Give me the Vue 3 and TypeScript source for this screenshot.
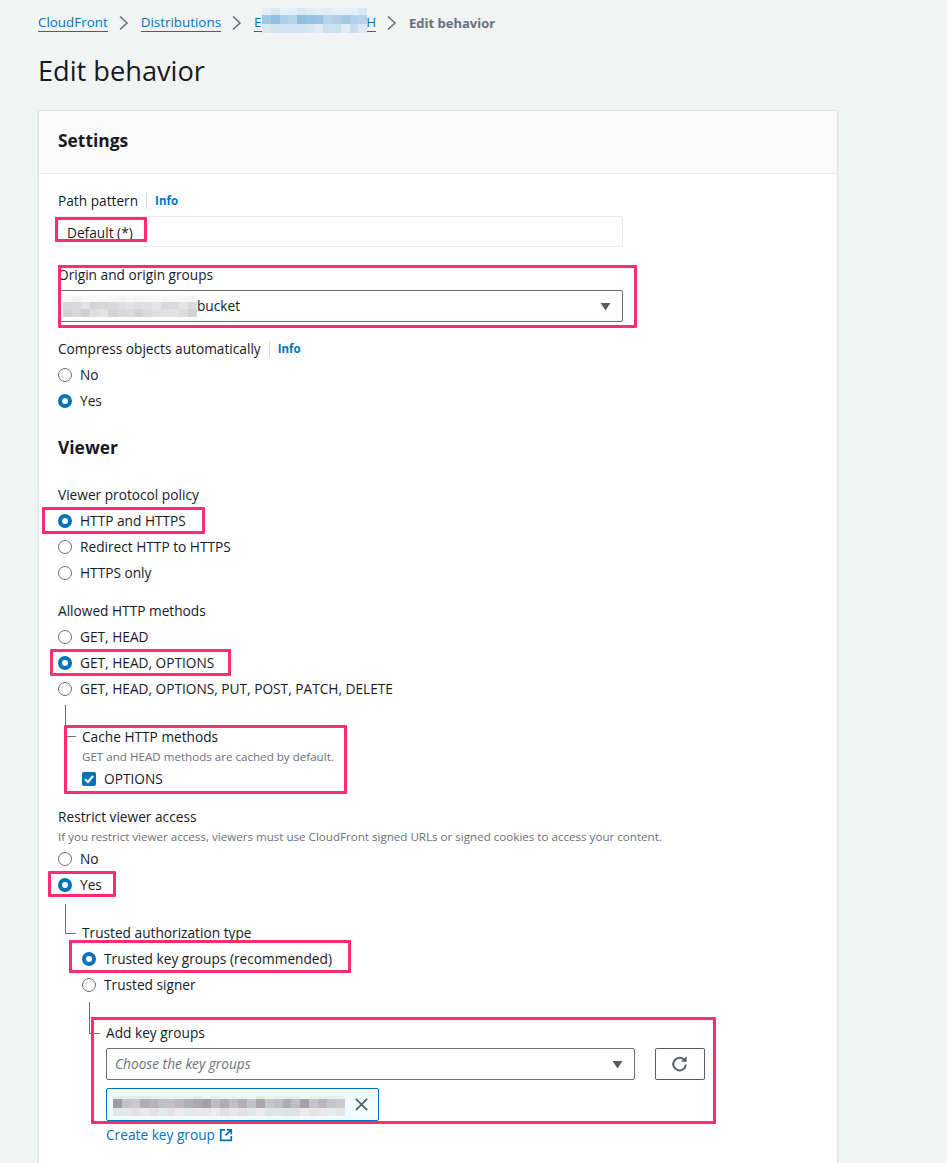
<script setup lang="ts">
const marks: string[] = ['m1', 'm2', 'm3', 'm4', 'm5', 'm6', 'm7', 'm8']

type Rgb = [number, number, number]

function mosaic(cols: number, rows: number, seed: number, tint: Rgb, strength: number[]): string[] {
  const out: string[] = []
  for (let r = 0; r < rows; r++) {
    for (let c = 0; c < cols; c++) {
      const n = Math.abs(Math.sin((c + 1) * 12.9898 + (r + 1) * 78.233 + seed) * 43758.5453) % 1
      const a = strength[r] * (0.55 + 0.45 * n)
      const mix = (v: number) => Math.round(255 + (v - 255) * a)
      out.push(`rgb(${mix(tint[0])},${mix(tint[1])},${mix(tint[2])})`)
    }
  }
  return out
}

const blueCells = mosaic(12, 3, 1, [120, 175, 215], [0.3, 0.85, 0.42])
const originCells = mosaic(15, 3, 2, [160, 162, 166], [0.12, 0.5, 0.5])
const keyCells = mosaic(26, 3, 3, [150, 152, 157], [0.2, 0.95, 0.3])
</script>

<template>
  <div class="page">
    <nav class="crumbs">
      <a class="link">CloudFront</a>
      <svg class="chev" viewBox="0 0 12 16"><path d="M2 1.5 L9 8 L2 14.5" /></svg>
      <a class="link">Distributions</a>
      <svg class="chev" viewBox="0 0 12 16"><path d="M2 1.5 L9 8 L2 14.5" /></svg>
      <a class="link dist">E<span class="dist-gap"></span>H
        <span class="mosaic blue-blur"><i v-for="(c, i) in blueCells" :key="i" :style="{ background: c }"></i></span>
      </a>
      <svg class="chev" viewBox="0 0 12 16"><path d="M2 1.5 L9 8 L2 14.5" /></svg>
      <span class="current">Edit behavior</span>
    </nav>
    <h1 class="title">Edit behavior</h1>

    <section class="card">
      <header class="card-head">Settings</header>
      <div class="card-body">
        <div class="label-row"><span>Path pattern</span><i class="sep"></i><a class="info">Info</a></div>
        <div class="readonly">Default (*)</div>

        <div class="label-row origin-label"><span>Origin and origin groups</span></div>
        <div class="select origin-select">
          <span class="mosaic origin-blur"><i v-for="(c, i) in originCells" :key="i" :style="{ background: c }"></i></span>
          <span>bucket</span>
          <svg class="caret" viewBox="0 0 12 10"><path d="M0.5 1h11L6 9.5z" /></svg>
        </div>

        <div class="label-row compress"><span>Compress objects automatically</span><i class="sep"></i><a class="info">Info</a></div>
        <label class="radio"><i class="dot"></i>No</label>
        <label class="radio"><i class="dot on"></i>Yes</label>

        <h2 class="sub">Viewer</h2>

        <div class="label-row"><span>Viewer protocol policy</span></div>
        <label class="radio"><i class="dot on"></i>HTTP and HTTPS</label>
        <label class="radio"><i class="dot"></i>Redirect HTTP to HTTPS</label>
        <label class="radio"><i class="dot"></i>HTTPS only</label>

        <div class="label-row gap-top"><span>Allowed HTTP methods</span></div>
        <label class="radio"><i class="dot"></i>GET, HEAD</label>
        <label class="radio"><i class="dot on"></i>GET, HEAD, OPTIONS</label>
        <label class="radio"><i class="dot"></i>GET, HEAD, OPTIONS, PUT, POST, PATCH, DELETE</label>

        <div class="nested cache">
          <div class="label-row"><span>Cache HTTP methods</span></div>
          <div class="hint cache-hint">GET and HEAD methods are cached by default.</div>
          <label class="radio check-row">
            <svg class="check" viewBox="0 0 14 14"><rect width="14" height="14" rx="2" /><path d="M3 7.2 L6 10 L11 4" /></svg>OPTIONS
          </label>
        </div>

        <div class="label-row restrict"><span>Restrict viewer access</span></div>
        <div class="hint restrict-hint">If you restrict viewer access, viewers must use CloudFront signed URLs or signed cookies to access your content.</div>
        <label class="radio after-hint"><i class="dot"></i>No</label>
        <label class="radio"><i class="dot on"></i>Yes</label>

        <div class="nested trusted">
          <div class="label-row"><span>Trusted authorization type</span></div>
          <label class="radio"><i class="dot on"></i>Trusted key groups (recommended)</label>
          <label class="radio"><i class="dot"></i>Trusted signer</label>

          <div class="nested keys">
            <div class="label-row"><span>Add key groups</span></div>
            <div class="key-row">
              <div class="select key-select">
                <em>Choose the key groups</em>
                <svg class="caret" viewBox="0 0 12 10"><path d="M0.5 1h11L6 9.5z" /></svg>
              </div>
              <button class="refresh" type="button" aria-label="Refresh">
                <svg viewBox="0 0 18 18"><path d="M14.8 9.5a6.3 6.3 0 1 1-2-5" /><path class="fill" d="M15.6 1.2v5.6H10z" /></svg>
              </button>
            </div>
            <div class="token">
              <span class="mosaic token-blur"><i v-for="(c, i) in keyCells" :key="i" :style="{ background: c }"></i></span>
              <svg class="x" viewBox="0 0 16 16"><path d="M2 2 L14 14 M14 2 L2 14" /></svg>
            </div>
            <a class="create">Create key group
              <svg class="ext" viewBox="0 0 16 16"><path d="M7 2H2v12h12V9" /><path d="M9 2h5v5M14 2 L7.5 8.5" /></svg>
            </a>
          </div>
        </div>
      </div>
    </section>

    <i v-for="m in marks" :key="m" class="mark" :class="m"></i>
  </div>
</template>

<style>
html, body { margin: 0; background: #f2f3f3; }
</style>

<style scoped>
.page {
  position: relative;
  box-sizing: border-box;
  width: 947px;
  height: 1163px;
  overflow: hidden;
  padding: 12px 0 0 38px;
  background: #f2f3f3;
  color: #16191f;
  font-family: "Open Sans", "Noto Sans", sans-serif;
  font-size: 13.7px;
  line-height: 22px;
}
.crumbs { display: flex; align-items: center; height: 22px; font-size: 13.4px; }
.link { color: #0073bb; border-bottom: 1px solid #0073bb; line-height: 17px; }
.dist { position: relative; display: inline-flex; width: 122px; }
.dist-gap { flex: 1; }
.mosaic { display: grid; }
.blue-blur {
  position: absolute; left: 8px; top: -6px; width: 105px; height: 25px;
  grid-template-columns: repeat(12, 1fr); grid-template-rows: 7px 9px 9px;
}
.chev { width: 12px; height: 16px; margin: 0 11px 0 10px; fill: none; stroke: #687078; stroke-width: 1.6; }
.current { font-weight: 700; color: #687078; font-size: 13px; }
.title { margin: 17px 0 0; font-size: 27.2px; line-height: 40px; font-weight: 400; }
.card {
  width: 800px; margin-top: 19px; box-sizing: border-box;
  background: #fff; border: 1px solid #dfe2e2; border-bottom: 0;
  box-shadow: 0 1px 1px rgba(0, 28, 36, .2);
}
.card-head {
  background: #fafafa; border-bottom: 1px solid #eaeded;
  height: 62px; line-height: 59px; padding-left: 19px;
  font-size: 17.4px; font-weight: 700;
}
.card-body { padding: 16px 19px 40px; }
.label-row { display: flex; align-items: center; height: 22px; }
.sep { width: 1px; height: 16px; background: #d5dbdb; margin: 0 8px; }
.info { color: #0073bb; font-size: 11.5px; font-weight: 700; }
.readonly {
  margin-top: 4px; width: 555px; height: 29px; border: 1px solid #eaeded;
  padding-left: 8px; line-height: 31px; border-radius: 2px;
}
.origin-label { margin-top: 17px; }
.select {
  position: relative; display: flex; align-items: center;
  box-sizing: border-box; border: 1px solid #687078; border-radius: 2px; height: 32px;
}
.origin-select { width: 565px; margin-top: 4px; padding-left: 4px; }
.caret { position: absolute; right: 11px; top: 11px; width: 11px; height: 9px; fill: #545b64; }
.compress { margin-top: 16px; }
.radio { display: flex; align-items: center; height: 22px; margin-top: 4px; }
.dot {
  box-sizing: border-box; width: 14px; height: 14px; border-radius: 50%;
  border: 1px solid #687078; margin-right: 8px; background: #fff;
}
.dot.on { border: 4px solid #0073bb; }
.sub { margin: 23px 0 25px; font-size: 17.4px; line-height: 24px; font-weight: 700; }
.gap-top { margin-top: 16px; }
.hint { font-size: 11.6px; line-height: 16px; color: #687078; }
.cache-hint { margin-top: 1px; }
.restrict-hint { margin-top: 1px; }
.after-hint { margin-top: 3px; }
.check-row { margin-top: 3px; }
.nested { position: relative; padding-left: 24px; }
.nested::before {
  content: ""; position: absolute; left: 7px; width: 10px;
  border-left: 1px solid #687078; border-bottom: 1px solid #687078;
}
.cache { margin-top: 5px; padding-top: 21px; }
.cache::before { top: 0; height: 31px; }
.check { width: 14px; height: 14px; margin-right: 8px; }
.check rect { fill: #0073bb; }
.check path { fill: none; stroke: #fff; stroke-width: 2; }
.restrict { margin-top: 16px; }
.trusted { margin-top: 5px; padding-top: 21px; }
.trusted::before { top: 3px; height: 29px; }
.keys { margin-top: 5px; padding-top: 21px; }
.keys::before { top: 1px; height: 31px; }
.key-row { display: flex; gap: 20px; margin-top: 4px; }
.key-select { width: 529px; padding-left: 8px; color: #687078; }
.refresh {
  width: 50px; height: 32px; box-sizing: border-box; border: 1px solid #545b64;
  border-radius: 2px; background: #fff; padding: 0; display: flex; align-items: center; justify-content: center;
}
.refresh svg { width: 18px; height: 18px; fill: none; stroke: #545b64; stroke-width: 2; }
.refresh .fill { fill: #545b64; stroke: none; }
.token {
  position: relative; box-sizing: border-box; width: 273px; height: 33px; margin-top: 8px;
  border: 1px solid #0073bb; border-radius: 2px; background: #f1faff;
}
.origin-blur {
  width: 134px; height: 21px;
  grid-template-columns: repeat(15, 1fr); grid-template-rows: 6px 7px 8px;
}
.token-blur {
  position: absolute; left: 6px; top: 7px; width: 232px; height: 20px;
  grid-template-columns: repeat(26, 1fr); grid-template-rows: 3px 9px 8px;
}
.x { position: absolute; right: 9px; top: 8px; width: 15px; height: 15px; fill: none; stroke: #545b64; stroke-width: 1.8; }
.create { display: flex; align-items: center; color: #0073bb; margin-top: 3px; height: 22px; }
.ext { width: 14px; height: 14px; margin-left: 4px; fill: none; stroke: #0073bb; stroke-width: 2; }

.mark { position: absolute; box-sizing: border-box; border: 3px solid #ff2d6f; border-radius: 1px; }
.m1 { left: 55px; top: 217px; width: 92px; height: 25px; }
.m2 { left: 58px; top: 265px; width: 579px; height: 63px; }
.m3 { left: 42px; top: 507px; width: 163px; height: 27px; }
.m4 { left: 50px; top: 649px; width: 181px; height: 27px; }
.m5 { left: 64px; top: 725px; width: 283px; height: 69px; }
.m6 { left: 48px; top: 871px; width: 68px; height: 26px; }
.m7 { left: 69px; top: 940px; width: 282px; height: 33px; }
.m8 { left: 91px; top: 1017px; width: 625px; height: 107px; }
</style>
